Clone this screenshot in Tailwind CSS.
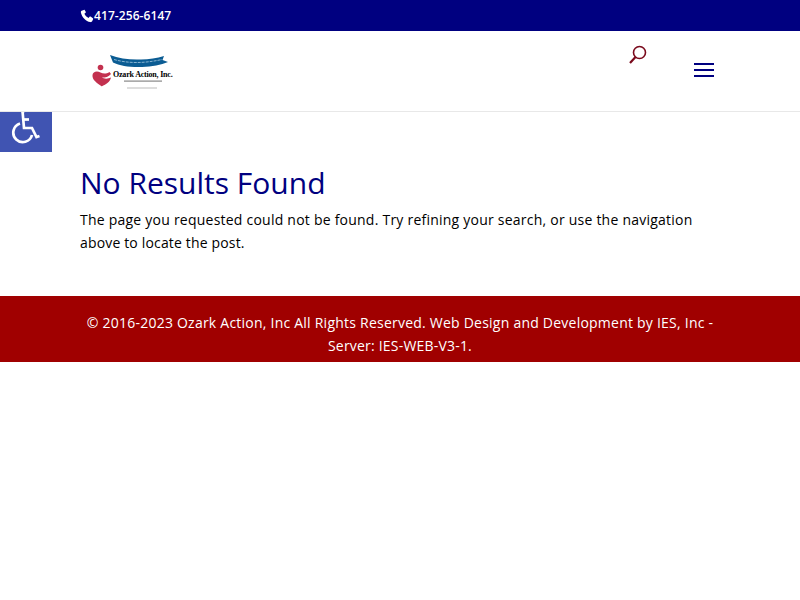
<!DOCTYPE html>
<html lang="en">
<head>
<meta charset="utf-8">
<title>No Results Found</title>
<script src="https://cdn.jsdelivr.net/npm/@tailwindcss/browser@4"></script>
</head>
<body class="bg-white font-['Open_Sans',sans-serif] text-[14px] text-black relative h-[600px] overflow-hidden">
  <div class="h-[31px] bg-[#000080] text-white">
    <div class="w-[640px] mx-auto h-full flex items-center">
      <svg class="w-[14px] h-[14px] mt-[1px]" viewBox="0 0 24 24" fill="#fff"><path d="M6.6 1.5 2.8 3.2C1.6 3.8 1.3 5 1.6 6.4c1.6 7.5 8.5 14.6 16 16 1.4.3 2.6 0 3.2-1.2l1.7-3.8c.3-.6.1-1.2-.4-1.6l-4-2.8c-.6-.4-1.2-.3-1.7.2l-1.9 2.1c-3.200-1.500-5.500-3.900-7-7l2.100-1.900c.5-.5.6-1.100.2-1.700L7.900 1.900c-.3-.5-.8-.6-1.300-.4Z"/></svg>
      <span class="text-[12px] leading-none font-semibold tracking-[0.08px]">417-256-6147</span>
    </div>
  </div>
  <header class="h-[81px] border-b border-[#e8e8e8] relative z-10 bg-white">
    <div class="w-[640px] mx-auto h-[80px] flex justify-between relative">
      <div class="w-[96px] h-[42px] mt-[21px] ml-[6px] relative">
        <svg class="absolute inset-0" width="96" height="42" viewBox="0 0 96 42">
          <path d="M24 3c9 3.500 20 5 31 4.500 8-.4 16-1 23-3.500l-1.500 4 5.500 2c-7 3-16 4.500-26 5-11 .5-22-1-29-4.500l-1-2.500Z" fill="#0b5c93"/>
          <path d="M28 7.500c14 4 30 4 48 0" stroke="#a8cbe2" stroke-width=".8" stroke-dasharray="3 1" fill="none"/>
          <circle cx="14.500" cy="15.500" r="2.800" fill="#c3314f"/>
          <path d="M16 34.500C11 31 6 28 6.500 23c.4-3.500 4.500-4.500 8-2.500 2.500 1.300 5.500 1.800 9-.5l1.500 2c-2.500 3-5.500 3.500-9 3.500 2 1.500 6 1.500 9 0-1 4.500-4.500 6.500-9.500 9Z" fill="#c3314f"/>
          <rect x="38" y="28.500" width="38" height="1.200" fill="#888"/>
          <rect x="41" y="35.500" width="30" height="1" fill="#bbb"/>
        </svg>
        <span class="absolute left-[27px] top-[19px] font-['Liberation_Serif',serif] text-[8px] font-bold leading-none text-black whitespace-nowrap tracking-[-0.2px]">Ozark Action, Inc.</span>
      </div>
      <div class="flex items-start mr-[6px]">
        <svg class="w-[20px] h-[20px] mt-[14px] mr-[46px]" viewBox="0 0 20 20" fill="none" stroke="#7a0a1c" stroke-width="1.600"><circle cx="11.500" cy="7.500" r="6"/><path d="M7.500 12 2 18" stroke-width="2.200"/></svg>
        <div class="mt-[32px] w-[20px] flex flex-col gap-[4px]">
          <div class="h-[2px] bg-[#000080]"></div>
          <div class="h-[2px] bg-[#000080]"></div>
          <div class="h-[2px] bg-[#000080]"></div>
        </div>
      </div>
    </div>
  </header>
  <main class="w-[640px] mx-auto pt-[52px] pb-[42px]">
    <h1 class="text-[30px] leading-[38px] text-[#000080] font-normal">No Results Found</h1>
    <p class="mt-[6px] leading-[23px] [text-rendering:optimizeSpeed] tracking-[0.23px]">The page you requested could not be found. Try refining your search, or use the navigation <span class="tracking-[0.16px]">above to locate the post.</span></p>
  </main>
  <footer class="h-[66px] bg-[#a00000] text-white text-center pt-[15px]">
    <p class="w-[640px] mx-auto leading-[23px] [text-rendering:optimizeSpeed] tracking-[0.23px]">© 2016-2023 Ozark Action, Inc All Rights Reserved. Web Design and Development by IES, Inc - <span class="tracking-[0.2px]">Server: IES-WEB-V3-1.</span></p>
  </footer>
  <div class="absolute left-0 top-[108px] w-[52px] h-[44px] bg-[#4054b2] z-0 overflow-hidden">
    <svg class="absolute left-[11px] top-0" width="32" height="37" viewBox="0 0 32 37" fill="none" stroke="#fff" stroke-width="2.700">
      <path d="M10 3h4M11.500 3l1.500 17h8l4.500 9 3-1"/><path d="M13 11.500h5"/>
      <path d="M9 15.500a9.500 9.500 0 1 0 12 11.500"/>
    </svg>
  </div>
</body>
</html>
